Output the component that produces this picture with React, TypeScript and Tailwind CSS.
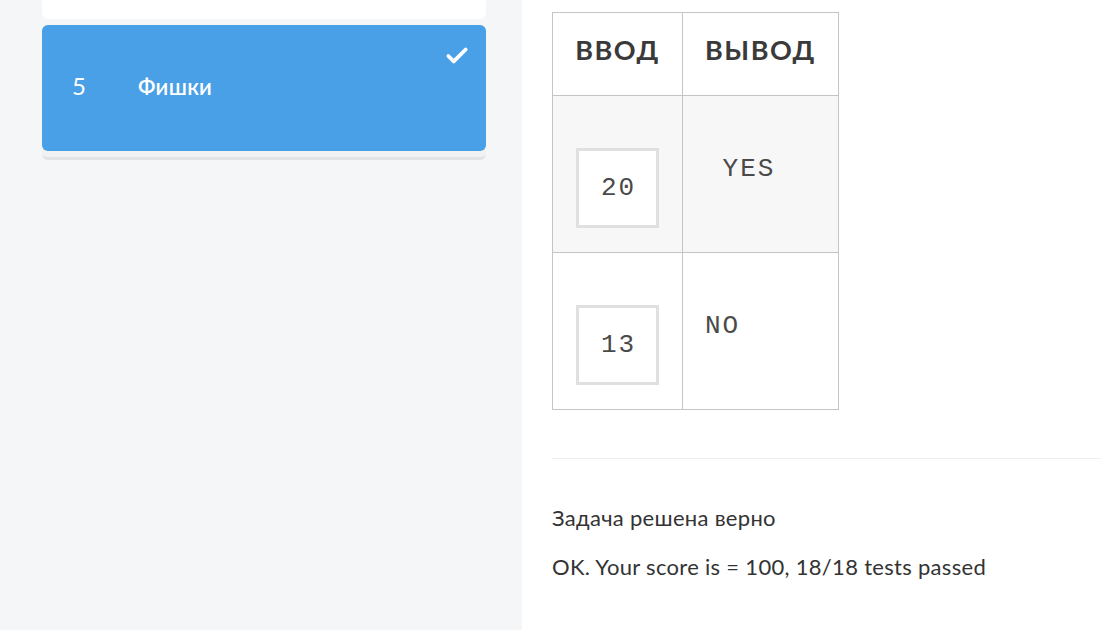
import { Check } from 'lucide-react';

const rows = [
  { input: '20', output: ' YES', shaded: true },
  { input: '13', output: 'NO', shaded: false },
];

function TaskCard() {
  return (
    <div className="rounded-md border-b-[3px] border-[#e2e4e6] bg-[#f1f2f3] pb-[6px]">
      <div className="relative flex h-[126px] items-center rounded-md bg-[#4aa0e6] pb-1 text-white">
        <span className="w-[96px] pl-[30px] text-[24px]">5</span>
        <span className="text-[22px] font-semibold tracking-[0.3px]">Фишки</span>
        <Check className="absolute right-[16px] top-[18px] h-[26px] w-[26px]" strokeWidth={3.5} />
      </div>
    </div>
  );
}

export default function App() {
  return (
    <div className="flex h-[630px] w-[1101px] overflow-hidden font-['Lato',sans-serif] text-[#333]">
      <aside className="w-[522px] shrink-0 bg-[#f5f6f8] pl-[42px] pr-[36px]">
        <div className="h-[19px] rounded-b-md bg-white" />
        <div className="mt-[6px]">
          <TaskCard />
        </div>
      </aside>

      <main className="flex-1 bg-white pl-[30px] pt-[12px]">
        <table className="table-fixed border-collapse">
          <thead>
            <tr>
              <th className="h-[83px] w-[130px] border border-[#c4c4c4] pb-2 text-center text-[27px] font-bold tracking-[1.5px] text-[#3a3a3a]">
                ВВОД
              </th>
              <th className="h-[83px] w-[156px] border border-[#c4c4c4] pb-2 text-center text-[27px] font-bold tracking-[1.5px] text-[#3a3a3a]">
                ВЫВОД
              </th>
            </tr>
          </thead>
          <tbody>
            {rows.map((row) => (
              <tr key={row.input} className={row.shaded ? 'bg-[#f7f7f7]' : 'bg-white'}>
                <td className="h-[157px] border border-[#c4c4c4] align-top">
                  <div className="mx-auto mt-[52px] flex h-[80px] w-[83px] items-center justify-center border-[3px] border-[#e0e0e0] bg-white pl-[2px] font-['Liberation_Mono',monospace] text-[26px] tracking-[2px] text-[#4a4a4a]">
                    {row.input}
                  </div>
                </td>
                <td className="h-[157px] border border-[#c4c4c4] align-top">
                  <pre className="pl-[22px] pt-[58px] font-['Liberation_Mono',monospace] text-[26px] leading-[30px] tracking-[2px] text-[#4a4a4a]">
                    {row.output}
                  </pre>
                </td>
              </tr>
            ))}
          </tbody>
        </table>

        <div className="mt-[48px] border-t border-[#eeeeee]" />

        <div className="pt-[44px] text-[22px] leading-[30px] tracking-[0.3px] text-[#333]">
          <p>Задача решена верно</p>
          <p className="mt-[19px]">OK. Your score is = 100, 18/18 tests passed</p>
        </div>
      </main>
    </div>
  );
}
